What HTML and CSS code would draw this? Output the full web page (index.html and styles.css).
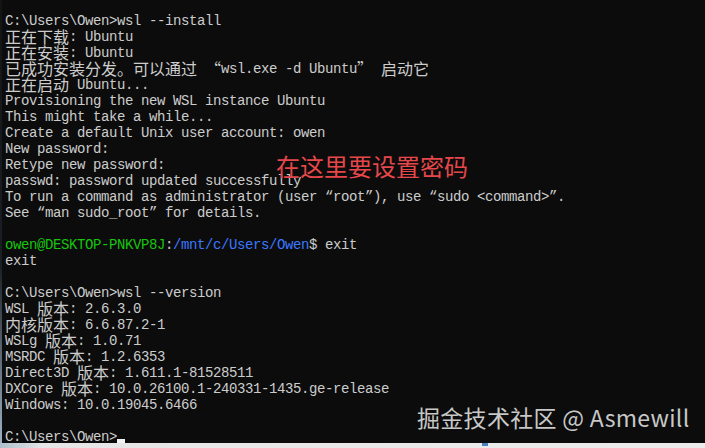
FILE: index.html
```html
<!DOCTYPE html>
<html lang="zh-CN">
<head>
<meta charset="utf-8">
<title>WSL install</title>
<link rel="stylesheet" href="styles.css">
</head>
<body>
<div class="screen">
  <div class="term">
    <div class="ln">C:\Users\Owen&gt;wsl --install</div>
    <div class="ln"><span class="c">正在下载</span>: Ubuntu</div>
    <div class="ln"><span class="c">正在安装</span>: Ubuntu</div>
    <div class="ln"><span class="c">已成功安装分发。可以通过</span> <span class="c">“</span>wsl.exe -d Ubuntu<span class="c">”</span> <span class="c">启动它</span></div>
    <div class="ln"><span class="c">正在启动</span> Ubuntu...</div>
    <div class="ln">Provisioning the new WSL instance Ubuntu</div>
    <div class="ln">This might take a while...</div>
    <div class="ln">Create a default Unix user account: owen</div>
    <div class="ln">New password:</div>
    <div class="ln">Retype new password:</div>
    <div class="ln">passwd: password updated successfully</div>
    <div class="ln">To run a command as administrator (user “root”), use “sudo &lt;command&gt;”.</div>
    <div class="ln">See “man sudo_root” for details.</div>
    <div class="ln"></div>
    <div class="ln"><span class="green">owen@DESKTOP-PNKVP8J</span>:<span class="blue">/mnt/c/Users/Owen</span>$ exit</div>
    <div class="ln">exit</div>
    <div class="ln"></div>
    <div class="ln">C:\Users\Owen&gt;wsl --version</div>
    <div class="ln">WSL <span class="c">版本</span>: 2.6.3.0</div>
    <div class="ln"><span class="c">内核版本</span>: 6.6.87.2-1</div>
    <div class="ln">WSLg <span class="c">版本</span>: 1.0.71</div>
    <div class="ln">MSRDC <span class="c">版本</span>: 1.2.6353</div>
    <div class="ln">Direct3D <span class="c">版本</span>: 1.611.1-81528511</div>
    <div class="ln">DXCore <span class="c">版本</span>: 10.0.26100.1-240331-1435.ge-release</div>
    <div class="ln">Windows: 10.0.19045.6466</div>
    <div class="ln"></div>
    <div class="ln">C:\Users\Owen&gt;<span class="cursor"></span></div>
  </div>
  <div class="note">在这里要设置密码</div>
  <div class="mark">掘金技术社区 @ Asmewill</div>
  <div class="taskbar"><span class="tb-icon"></span></div>
</div>
</body>
</html>
```
FILE: styles.css
```css
html, body {
  margin: 0;
  padding: 0;
  background: #0c0c0c;
}
.screen {
  position: relative;
  width: 705px;
  height: 448px;
  overflow: hidden;
  display: flex;
  flex-direction: column;
  background: #0c0c0c;
}
.term {
  height: 443px;
  flex: none;
  overflow: visible;
  box-sizing: border-box;
  padding: 12px 0 0 3px;
  border-left: 2px solid #1c2329;
  border-image: linear-gradient(#141414, #1a1f24 60%, #9fb3c4) 1;
  color: #cccccc;
  font-family: "Liberation Mono", monospace;
  font-size: 14px;
  letter-spacing: -0.4px;
}
.ln {
  height: 16px;
  line-height: 18px;
  white-space: pre;
  overflow: visible;
}
.c {
  display: inline-block;
  height: 16px;
  vertical-align: top;
  font-family: "Noto Sans CJK SC", sans-serif;
  font-size: 16px;
  letter-spacing: 0;
  line-height: 16px;
}
.green { color: #16c60c; }
.blue { color: #3b78ff; }
.cursor {
  display: inline-block;
  width: 8px;
  height: 4px;
  background: #f2f2f2;
  vertical-align: -2px;
}
.note {
  position: absolute;
  left: 276px;
  top: 154px;
  font-family: "Noto Sans CJK SC", sans-serif;
  font-size: 24px;
  line-height: 24px;
  color: #e5474a;
}
.mark {
  position: absolute;
  left: 417px;
  top: 405px;
  font-family: "Noto Sans CJK SC", sans-serif;
  font-size: 23px;
  line-height: 24px;
  letter-spacing: 0.3px;
  color: rgba(235, 235, 235, 0.85);
}
.taskbar {
  height: 5px;
  flex: none;
  background: linear-gradient(90deg, #aebfcc, #e6e6e6 6%, #ececec);
  position: relative;
}
.tb-icon {
  position: absolute;
  left: 482px;
  top: 0;
  width: 6px;
  height: 3px;
  background: #4a7fc2;
}
```
